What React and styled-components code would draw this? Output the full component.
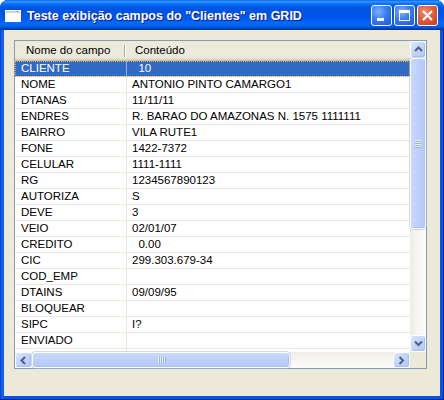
import React from "react";
import styled, { createGlobalStyle } from "styled-components";

const GlobalStyle = createGlobalStyle`
  html, body {
    margin: 0;
    padding: 0;
    background: #ffffff;
  }
  body {
    font-family: "Liberation Sans", Arial, sans-serif;
  }
`;

const fields = [
  ["CLIENTE", "  10"],
  ["NOME", "ANTONIO PINTO CAMARGO1"],
  ["DTANAS", "11/11/11"],
  ["ENDRES", "R. BARAO DO AMAZONAS N. 1575 1111111"],
  ["BAIRRO", "VILA RUTE1"],
  ["FONE", "1422-7372"],
  ["CELULAR", "1111-1111"],
  ["RG", "1234567890123"],
  ["AUTORIZA", "S"],
  ["DEVE", "3"],
  ["VEIO", "02/01/07"],
  ["CREDITO", "  0.00"],
  ["CIC", "299.303.679-34"],
  ["COD_EMP", ""],
  ["DTAINS", "09/09/95"],
  ["BLOQUEAR", ""],
  ["SIPC", "I?"],
  ["ENVIADO", ""],
  ["", ""],
];

//window chrome
const Window = styled.div`
  width: 444px;
  height: 400px;
  display: flex;
  flex-direction: column;
  border-radius: 8px 8px 0 0;
  overflow: hidden;
  background: #0a48dc;
`;

const TitleBar = styled.div`
  height: 30px;
  flex: none;
  display: flex;
  align-items: center;
  padding: 1px 6px 0 5px;
  box-sizing: border-box;
  background: linear-gradient(
    180deg,
    #0058ee 0%,
    #3593ff 4%,
    #288eff 7%,
    #127dff 10%,
    #036ffc 14%,
    #0262ee 18%,
    #0057e5 24%,
    #0054e3 30%,
    #0055eb 56%,
    #005bf5 66%,
    #026afe 76%,
    #0062ef 86%,
    #0052d6 92%,
    #0040ab 96%,
    #003092 100%
  );
`;

const Title = styled.span`
  margin-left: 6px;
  color: #ffffff;
  font-size: 12.5px;
  font-weight: bold;
  text-shadow: 1px 1px 0 #0a1883;
  white-space: nowrap;
`;

const Buttons = styled.div`
  margin-left: auto;
  display: flex;
  gap: 2px;
`;

const CaptionButton = styled.div`
  width: 21px;
  height: 21px;
  box-sizing: border-box;
  border: 1px solid #ffffff;
  border-radius: 3px;
  display: flex;
  align-items: center;
  justify-content: center;
  background: ${(p) =>
    p.$close
      ? "radial-gradient(circle at 35% 30%, #f08c6c 0%, #e0603c 45%, #c4391a 100%)"
      : "radial-gradient(circle at 35% 30%, #7fb0ff 0%, #3a7df2 45%, #1d56d8 100%)"};
`;

const Frame = styled.div`
  flex: 1;
  display: flex;
  padding: 0 4px 4px;
  background: linear-gradient(90deg, #0831d9 0, #166aee 2px, #0855dd 4px);
  box-shadow: inset 0 -1px 0 #001ea0, inset -1px 0 0 #001ea0;
`;

const Client = styled.div`
  flex: 1;
  background: #ece9d8;
  padding: 10px 13px 27px 10px;
`;

//grid
const GridBox = styled.div`
  width: 413px;
  height: 329px;
  box-sizing: border-box;
  border: 1px solid #7f9db9;
  background: #ffffff;
  display: grid;
  grid-template-columns: 395px 16px;
  grid-template-rows: 311px 16px;
`;

const Content = styled.div`
  overflow: hidden;
  font-size: 11.5px;
  color: #000000;
`;

const Header = styled.div`
  height: 20px;
  display: flex;
  background: linear-gradient(
    180deg,
    #ebeadb 0,
    #ebeadb 17px,
    #e2decd 17px,
    #e2decd 18px,
    #d6d2c2 18px,
    #d6d2c2 19px,
    #cbc7b8 19px
  );
`;

const HeaderCell = styled.div`
  width: ${(p) => p.$width || "auto"};
  flex: ${(p) => (p.$width ? "none" : "1")};
  padding-left: ${(p) => p.$pad}px;
  line-height: 19px;
  white-space: nowrap;
  box-sizing: border-box;
`;

const HeaderDivider = styled.div`
  width: 0;
  margin: 4px 0 4px;
  border-left: 1px solid #aca899;
  border-right: 1px solid #ffffff;
`;

const Row = styled.div`
  height: 16px;
  box-sizing: border-box;
  display: grid;
  grid-template-columns: 112px 1fr;
  border-bottom: 1px solid #ece9df;
  background: ${(p) => (p.$selected ? "#316ac5" : "#ffffff")};
  color: ${(p) => (p.$selected ? "#ffffff" : "#000000")};
  outline: ${(p) => (p.$selected ? "1px dotted #e2a43c" : "none")};
  outline-offset: -1px;
`;

const Cell = styled.div`
  line-height: 15px;
  white-space: pre;
  overflow: hidden;
  padding-left: ${(p) => p.$pad}px;
  border-right: ${(p) => (p.$first ? "1px solid" : "none")};
  border-right-color: ${(p) => (p.$selected ? "#8fb0e6" : "#ece9df")};
`;

//scrollbars
const VScroll = styled.div`
  display: flex;
  flex-direction: column;
  background: linear-gradient(90deg, #eeede5 0%, #f7f6f2 50%, #fcfcfb 100%);
`;

const HScroll = styled.div`
  display: flex;
  background: linear-gradient(180deg, #eeede5 0%, #f7f6f2 50%, #fcfcfb 100%);
`;

const Corner = styled.div`
  background: #ece9d8;
`;

const ArrowButton = styled.div`
  flex: none;
  width: ${(p) => (p.$horizontal ? "17px" : "16px")};
  height: ${(p) => (p.$horizontal ? "16px" : "17px")};
  box-sizing: border-box;
  border: 1px solid #ffffff;
  border-radius: 3px;
  display: flex;
  align-items: center;
  justify-content: center;
  background: linear-gradient(135deg, #dce7fe 0%, #c1d4fb 50%, #b2c8f7 100%);
  box-shadow: inset -1px -1px 0 #a6bdf0;
`;

const Thumb = styled.div`
  flex: none;
  box-sizing: border-box;
  width: ${(p) => (p.$horizontal ? `${p.$size}px` : "16px")};
  height: ${(p) => (p.$horizontal ? "16px" : `${p.$size}px`)};
  border: 1px solid #ffffff;
  border-radius: 3px;
  display: flex;
  align-items: center;
  justify-content: center;
  background: ${(p) =>
    p.$horizontal
      ? "linear-gradient(180deg, #cad9fd 0%, #bdd0fb 50%, #b3c9f8 100%)"
      : "linear-gradient(90deg, #cad9fd 0%, #bdd0fb 50%, #b3c9f8 100%)"};
  box-shadow: 0 0 0 0.5px #9fb6ec, inset -1px -1px 0 #a9c0f2;
`;

const Grip = styled.div`
  display: flex;
  flex-direction: ${(p) => (p.$horizontal ? "row" : "column")};
  gap: 1px;
`;

const GripLine = styled.div`
  width: ${(p) => (p.$horizontal ? "1px" : "6px")};
  height: ${(p) => (p.$horizontal ? "6px" : "1px")};
  background: #eef4fe;
  box-shadow: ${(p) => (p.$horizontal ? "1px 0 0 #8cb0f8" : "0 1px 0 #8cb0f8")};
`;

const Chevron = ({ dir }) => {
  const paths = {
    up: "M1 5 L4.5 1.5 L8 5",
    down: "M1 1.5 L4.5 5 L8 1.5",
    left: "M5 1 L1.5 4.5 L5 8",
    right: "M1.5 1 L5 4.5 L1.5 8",
  };
  const horizontal = dir === "left" || dir === "right";
  return (
    <svg
      width={horizontal ? 7 : 9}
      height={horizontal ? 9 : 7}
      viewBox={horizontal ? "0 0 7 9" : "0 0 9 7"}
    >
      <path d={paths[dir]} fill="none" stroke="#4d6185" strokeWidth="2" />
    </svg>
  );
};

const ThumbGrip = ({ horizontal }) => (
  <Grip $horizontal={horizontal}>
    {[0, 1, 2, 3].map((i) => (
      <GripLine key={i} $horizontal={horizontal} />
    ))}
  </Grip>
);

const WindowIcon = () => (
  <svg width="16" height="12" viewBox="0 0 16 12">
    <rect x="0" y="0" width="16" height="12" fill="#ffffff" />
    <rect x="1" y="1" width="14" height="2" fill="#c9d6ee" />
    <rect x="12" y="1" width="1" height="1" fill="#e05a3a" />
    <rect x="1" y="3" width="14" height="8" fill="#ffffff" />
  </svg>
);

export default function App() {
  return (
    <>
      <GlobalStyle />
      <Window>
        <TitleBar>
          <WindowIcon />
          <Title>Teste exibição campos do "Clientes" em GRID</Title>
          <Buttons>
            <CaptionButton>
              <svg width="19" height="19" viewBox="0 0 19 19">
                <rect x="5" y="12" width="7" height="3" fill="#ffffff" />
              </svg>
            </CaptionButton>
            <CaptionButton>
              <svg width="19" height="19" viewBox="0 0 19 19">
                <rect x="4.5" y="4.5" width="10" height="10" fill="none" stroke="#ffffff" strokeWidth="1" />
                <rect x="4" y="4" width="11" height="3" fill="#ffffff" />
              </svg>
            </CaptionButton>
            <CaptionButton $close>
              <svg width="19" height="19" viewBox="0 0 19 19">
                <path d="M5 5 L14 14 M14 5 L5 14" stroke="#ffffff" strokeWidth="2" />
              </svg>
            </CaptionButton>
          </Buttons>
        </TitleBar>
        <Frame>
          <Client>
            <GridBox>
              <Content>
                <Header>
                  <HeaderCell $width="109px" $pad={11}>
                    Nome do campo
                  </HeaderCell>
                  <HeaderDivider />
                  <HeaderCell $pad={9}>Conteúdo</HeaderCell>
                </Header>
                {fields.map(([name, value], i) => (
                  <Row key={i} $selected={i === 0}>
                    <Cell $first $pad={6} $selected={i === 0}>
                      {name}
                    </Cell>
                    <Cell $pad={5}>{value}</Cell>
                  </Row>
                ))}
              </Content>
              <VScroll>
                <ArrowButton>
                  <Chevron dir="up" />
                </ArrowButton>
                <Thumb $size={171}>
                  <ThumbGrip />
                </Thumb>
                <div style={{ flex: 1 }} />
                <ArrowButton>
                  <Chevron dir="down" />
                </ArrowButton>
              </VScroll>
              <HScroll>
                <ArrowButton $horizontal>
                  <Chevron dir="left" />
                </ArrowButton>
                <Thumb $horizontal $size={258}>
                  <ThumbGrip horizontal />
                </Thumb>
                <div style={{ flex: 1 }} />
                <ArrowButton $horizontal>
                  <Chevron dir="right" />
                </ArrowButton>
              </HScroll>
              <Corner />
            </GridBox>
          </Client>
        </Frame>
      </Window>
    </>
  );
}
